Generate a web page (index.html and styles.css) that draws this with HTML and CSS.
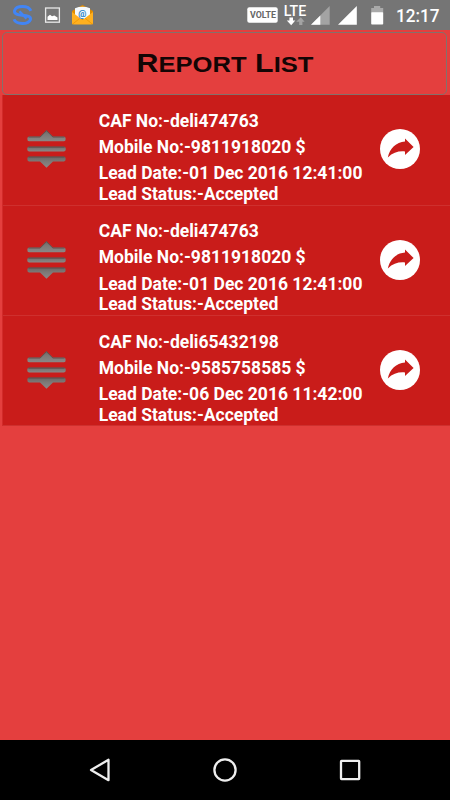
FILE: index.html
```html
<!DOCTYPE html>
<html lang="en">

<head>
    <meta charset="UTF-8">
    <meta name="viewport" content="width=device-width, initial-scale=1.0">
    <title>Report List</title>
    <link rel="stylesheet" href="styles.css">
</head>

<body>
    <!-- shared icons for the list rows -->
    <svg class="defs" width="0" height="0">
        <defs>
            <linearGradient id="bar" x1="0" y1="0" x2="0" y2="1">
                <stop offset="0" stop-color="#6b6462" />
                <stop offset="0.4" stop-color="#7c7876" />
                <stop offset="1" stop-color="#8b8887" />
            </linearGradient>
            <symbol id="drag" viewBox="0 0 42 42">
                <g fill="url(#bar)">
                    <path d="M3 8.6H14L20.5 2 27 8.6H38Q39.7 8.8 39.7 10.8 39.7 13.3 38 13.3H3Q1.3 13.3 1.3 10.8 1.3 8.8 3 8.6Z" />
                    <rect x="1.3" y="18.6" width="38.4" height="4.8" rx="2" />
                    <path d="M3 28.6H38Q39.7 28.8 39.7 30.8 39.7 33.4 38 33.4H27L20.5 39.7 14 33.4H3Q1.3 33.4 1.3 30.8 1.3 28.8 3 28.6Z" />
                </g>
                <path d="M2.5 9H14.2L20.5 2.6 26.8 9H38.5M2.5 19.1H38.5M2.5 29H38.5" fill="none" stroke="#5b4543" stroke-width="0.8" />
            </symbol>
            <symbol id="share" viewBox="0 0 40 40">
                <circle cx="20" cy="20" r="20" fill="#fff" />
                <path d="M7.8 28.4C10 19.3 16 13.4 25 12.6V9.6L33.6 18 25 26V22.4C18.5 21.8 13 23.5 7.8 28.4Z" fill="#c91c1a" />
            </symbol>
        </defs>
    </svg>

    <div class="status-bar">
        <svg class="status-left" width="100" height="30" viewBox="0 0 100 30">
            <path d="M30.9 10.8C28.5 5.2 16.2 5 14.5 10.8 14 14 18 15 22.3 15.3 27.5 15.7 30.9 16.6 30.5 19.4 28.5 24.9 16.2 24.9 14 19.3" fill="none" stroke="#4285f4" stroke-width="3" />
            <path d="M19.5 11.2L26.5 18.6" stroke="#4285f4" stroke-width="2.4" />
            <rect x="45.6" y="8" width="13.8" height="14.2" fill="#777" stroke="#e8e8e8" stroke-width="1.3" />
            <path d="M47.5 20V16.8L50 14.8 52 16.2 54.3 15.6 57.5 17.5V20Z" fill="#fff" />
            <path d="M72 11L82.5 5 93 11V24H72Z" fill="#e08b00" />
            <path d="M75 8.2Q82.5 5.5 90 8.2V19H75Z" fill="#f4faff" />
            <path d="M72 12L82.5 20 93 12V23Q93 24.6 91 24.6H74Q72 24.6 72 23Z" fill="#ffb01f" />
            <path d="M72.7 24L80 18.2M92.3 24L85 18.2" stroke="#f29b07" />
            <text class="mail-at" x="82.4" y="16.8" text-anchor="middle">@</text>
        </svg>
        <svg class="status-right" width="210" height="30" viewBox="240 0 210 30">
            <rect x="247.3" y="7.2" width="30.4" height="15.6" rx="2" fill="#fff" />
            <text class="volte" x="250" y="18.4" textLength="26" lengthAdjust="spacingAndGlyphs">VOLTE</text>
            <text class="lte" x="283.7" y="16.2" textLength="22.5" lengthAdjust="spacingAndGlyphs">LTE</text>
            <path d="M289.4 17.5H293V20.5H295.3L291.2 25.2 286.8 20.5H289.4Z" fill="#fff" />
            <path d="M299.2 25V21.8H296.2L300.8 17.3 304.6 21.8H302.4V25Z" fill="#a3a3a3" />
            <path d="M311 24.7L329.7 6V24.7Z" fill="#a3a3a3" />
            <path d="M311 24.7L320.3 15.4V24.7Z" fill="#fff" />
            <path d="M338 24.7L356.8 6V24.7Z" fill="#fff" />
            <path d="M374 6H380.2V8H383.2V13H371.2V8H374Z" fill="#a9a9a9" />
            <rect x="371.2" y="12.3" width="12" height="12.2" rx="0.8" fill="#fff" />
            <text class="clock" x="396" y="22.2" textLength="43.5" lengthAdjust="spacingAndGlyphs">12:17</text>
        </svg>
    </div>

    <div class="screen">
        <div class="header">
            <svg width="180" height="30" viewBox="135 48 180 30">
                <text class="title" x="136.5" y="72.4" textLength="177" lengthAdjust="spacingAndGlyphs">R<tspan class="small">EPORT</tspan> L<tspan class="small">IST</tspan></text>
            </svg>
        </div>

        <div class="list">
            <div class="row">
                <svg class="drag"><use href="#drag" /></svg>
                <div class="info">
                    <p>CAF No:-deli474763</p>
                    <p>Mobile No:-9811918020 $</p>
                    <p>Lead Date:-01 Dec 2016 12:41:00</p>
                    <p class="status">Lead Status:-Accepted</p>
                </div>
                <svg class="share"><use href="#share" /></svg>
            </div>
            <div class="row">
                <svg class="drag"><use href="#drag" /></svg>
                <div class="info">
                    <p>CAF No:-deli474763</p>
                    <p>Mobile No:-9811918020 $</p>
                    <p>Lead Date:-01 Dec 2016 12:41:00</p>
                    <p class="status">Lead Status:-Accepted</p>
                </div>
                <svg class="share"><use href="#share" /></svg>
            </div>
            <div class="row">
                <svg class="drag"><use href="#drag" /></svg>
                <div class="info">
                    <p>CAF No:-deli65432198</p>
                    <p>Mobile No:-9585758585 $</p>
                    <p>Lead Date:-06 Dec 2016 11:42:00</p>
                    <p class="status">Lead Status:-Accepted</p>
                </div>
                <svg class="share"><use href="#share" /></svg>
            </div>
        </div>
    </div>

    <div class="nav-bar">
        <svg width="24" height="26" viewBox="0 0 24 26"><path d="M20.5 2.8V23.2L3 13Z" /></svg>
        <svg width="26" height="26" viewBox="0 0 26 26"><circle cx="13" cy="13" r="10.6" /></svg>
        <svg width="24" height="26" viewBox="0 0 24 26"><rect x="3" y="3.9" width="18.2" height="18.2" rx="0.5" /></svg>
    </div>
</body>

</html>
```

FILE: styles.css
```css
body {
    display: flex;
    flex-direction: column;
    width: 450px;
    height: 800px;
    margin: 0;
    overflow: hidden;
    background-color: #e43f3e;
    font-family: Roboto, "Liberation Sans", sans-serif;
}

svg {
    display: block;
    flex-shrink: 0;
}

.defs {
    height: 0;
}

.status-bar {
    display: flex;
    justify-content: space-between;
    height: 30px;
    background-color: #757575;
}

.mail-at {
    font-size: 9px;
    font-weight: bold;
    fill: #1c7fc4;
}

.volte {
    font-size: 9.2px;
    font-weight: bold;
    fill: #666;
}

.lte {
    font-size: 14px;
    font-weight: 500;
    fill: #fff;
}

.clock {
    font-size: 18px;
    font-weight: 500;
    fill: #fff;
}

.screen {
    flex: 1;
    padding-top: 2px;
}

.header {
    box-sizing: border-box;
    display: flex;
    justify-content: center;
    height: 63px;
    margin: 0 3px 0 2px;
    padding-top: 15px;
    border: 1px solid #85706b;
    border-radius: 5px;
}

.title {
    font-family: "Liberation Sans", sans-serif;
    font-size: 25.5px;
    font-weight: bold;
    fill: #140505;
}

.title .small {
    font-size: 21.5px;
}

.list {
    margin-left: 2px;
    border-left: 1px solid #d22b2a;
}

.row {
    box-sizing: border-box;
    display: flex;
    height: 110.5px;
    background-color: #c91c1a;
    border-bottom: 1px solid #ce302e;
}

.row:last-child {
    height: 110px;
}

.drag {
    width: 42px;
    height: 42px;
    margin: 33px 0 0 23px;
}

.info {
    width: 281px;
    margin-left: 30.7px;
    padding-top: 12.6px;
    color: #fff;
    font-size: 17.5px;
    font-weight: bold;
    white-space: nowrap;
}

.info p {
    height: 26.4px;
    margin: 0;
    line-height: 26px;
}

.info .status {
    margin-top: -6px;
}

.share {
    width: 40px;
    height: 40px;
    margin-top: 34.4px;
}

.nav-bar {
    display: flex;
    justify-content: space-between;
    align-items: center;
    height: 60px;
    padding: 0 88px;
    background-color: #000;
}

.nav-bar svg {
    fill: none;
    stroke: #eee;
    stroke-width: 2.3;
    stroke-linejoin: round;
}
```
